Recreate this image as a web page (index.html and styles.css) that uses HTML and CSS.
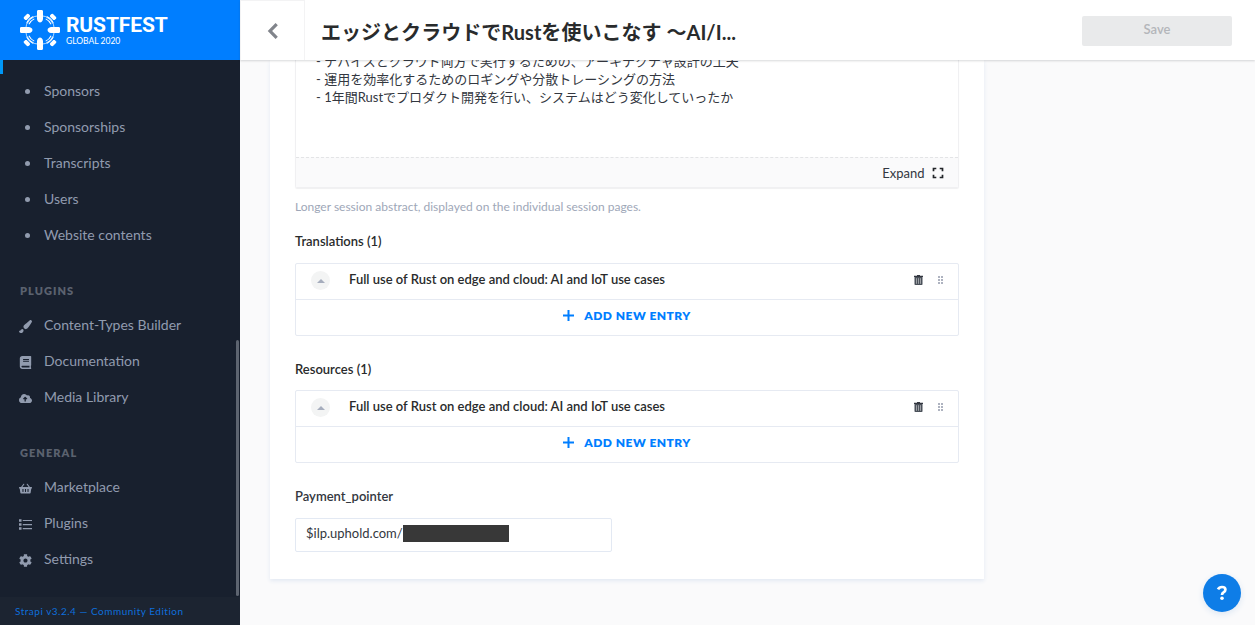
FILE: index.html
```html
<!DOCTYPE html>
<html lang="en">
<head>
<meta charset="utf-8">
<title>RustFest Global 2020</title>
<link rel="stylesheet" href="styles.css">
</head>
<body>
<div class="app">
  <aside class="sidebar">
    <div class="brand">
      <svg class="brand-mark" viewBox="-20 -20 40 40" width="40" height="40">
        <defs>
          <g id="gear-arm">
            <path d="M-2.200-20H2.200L3-19V-11Q3-9.500 1.500-8L0-7.500L-1.500-8Q-3-9.500-3-11V-19Z" fill="#fff"/>
          </g>
          <g id="gear-diagonal">
            <path d="M-2.500-20.500H2.500L3.300-19.500V-17.500L2.300-16.500H-2.300L-3.300-17.500V-19.500Z" fill="#fff"/>
            <path d="M-4.800-14.200Q0-16 4.800-14.200M-3.800-11.900Q0-13.300 3.800-11.900" fill="none" stroke="#fff" stroke-width="1"/>
          </g>
        </defs>
        <circle r="14.500" fill="none" stroke="#fff" stroke-width=".7"/>
        <use href="#gear-arm"/><use href="#gear-arm" transform="rotate(90)"/><use href="#gear-arm" transform="rotate(180)"/><use href="#gear-arm" transform="rotate(270)"/>
        <use href="#gear-diagonal" transform="rotate(45)"/><use href="#gear-diagonal" transform="rotate(135)"/><use href="#gear-diagonal" transform="rotate(225)"/><use href="#gear-diagonal" transform="rotate(315)"/>
      </svg>
      <div class="brand-text"><div class="brand-name">RUSTFEST</div><div class="brand-sub">GLOBAL 2020</div></div>
    </div>
    <nav class="nav">
      <div class="active-row"></div>
      <a class="link"><i class="dot"></i>Sponsors</a>
      <a class="link"><i class="dot"></i>Sponsorships</a>
      <a class="link"><i class="dot"></i>Transcripts</a>
      <a class="link"><i class="dot"></i>Users</a>
      <a class="link"><i class="dot"></i>Website contents</a>
      <h3 class="section">PLUGINS</h3>
      <a class="link"><svg class="icon" viewBox="0 0 512 512"><path d="M180 390c8 76-45 122-112 122C17 512 0 467 0 411c5 3 25 20 33 20 7 0 12-3 15-9 14-40 62-61 101-63ZM457 0c-15 0-29 7-40 17C213 189 177 211 177 264c0 14 3 27 8 40l47 53c10 3 20 5 31 5 61 0 97-45 237-269 6-12 12-25 12-39 0-23-27-54-55-54Z"/></svg>Content-Types Builder</a>
      <a class="link"><svg class="icon" viewBox="0 0 448 512"><path d="M448 360V24c0-13-11-24-24-24H96C43 0 0 43 0 96v320c0 53 43 96 96 96h328c13 0 24-11 24-24v-16c0-8-4-14-9-19-4-15-4-59 0-74 5-4 9-11 9-19ZM128 120h232v36H128Zm0 70h232v36H128Zm253 258H96c-42 0-42-64 0-64h285Z"/></svg>Documentation</a>
      <a class="link"><svg class="icon" viewBox="0 0 640 512"><path d="M538 227c4-11 6-23 6-35 0-71-80-118-149-80C368 67 317 32 256 32c-91 0-166 78-160 168C40 220 0 274 0 336c0 80 64 144 144 144h368c71 0 128-57 128-128 0-62-44-114-102-125ZM393 288h-57v110h-64V288h-57c-14 0-21-17-11-27l89-89c6-6 16-6 22 0l89 89c10 10 3 27-11 27Z"/></svg>Media Library</a>
      <h3 class="section">GENERAL</h3>
      <a class="link"><svg class="icon" viewBox="0 0 576 512"><path fill-rule="evenodd" d="M576 216v16c0 13-11 24-24 24h-8l-26 182c-3 24-23 42-47 42H105c-24 0-44-18-47-42L32 256h-8c-13 0-24-11-24-24v-16c0-13 11-24 24-24h67L193 53c19-28 58 0 39 27l-82 112h276L344 80c-19-27 20-55 39-27l102 139h67c13 0 24 11 24 24ZM312 392V280h-48v112c0 32 48 32 48 0Zm112 0V280h-48v112c0 32 48 32 48 0Zm-224 0V280h-48v112c0 32 48 32 48 0Z"/></svg>Marketplace</a>
      <a class="link"><svg class="icon" viewBox="0 0 512 512"><path d="M0 48h100v100H0Zm0 158h100v100H0Zm0 158h100v100H0ZM148 75h364v48H148Zm0 158h364v48H148Zm0 158h364v48H148Z"/></svg>Plugins</a>
      <a class="link"><svg class="icon" viewBox="0 0 512 512"><path fill-rule="evenodd" d="M487 316l-42-25c4-23 4-47 0-70l42-25c5-3 8-9 6-14-11-36-30-68-55-95-4-4-10-5-15-2l-42 25c-18-15-39-27-61-35V26c0-6-4-11-10-12-37-8-75-8-110 0-6 1-10 6-10 12v49c-22 8-43 20-61 35L87 85c-5-3-11-2-15 2-25 27-44 59-55 95-2 5 1 11 6 14l42 25c-4 23-4 47 0 70l-42 25c-5 3-8 9-6 14 11 36 30 68 55 95 4 4 10 5 15 2l42-25c18 15 39 27 61 35v49c0 6 4 11 10 12 37 8 75 8 110 0 6-1 10-6 10-12v-49c22-8 43-20 61-35l42 25c5 3 11 2 15-2 25-27 44-59 55-95 2-5-1-11-6-14ZM256 336c-107 0-107-160 0-160s107 160 0 160Z"/></svg>Settings</a>
    </nav>
    <i class="scroll-thumb"></i>
    <footer class="version">Strapi v3.2.4 — Community Edition</footer>
  </aside>
  <div class="main">
    <header class="topbar">
      <div class="back"><svg width="12" height="18" viewBox="0 0 12 18"><path d="M9.700 2.200L3 9l6.700 6.800" fill="none" stroke="#81848b" stroke-width="3.200"/></svg></div>
      <h1 class="title">エッジとクラウドでRustを使いこなす 〜AI/I...</h1>
      <button class="save">Save</button>
    </header>
    <main class="content">
      <section class="card">
        <div class="editor">
          <div class="editor-text"><div>- デバイスとクラウド両方で実行するための、アーキテクチャ設計の工夫</div><div>- 運用を効率化するためのロギングや分散トレーシングの方法</div><div>- 1年間Rustでプロダクト開発を行い、システムはどう変化していったか</div></div>
          <div class="editor-bar">Expand<svg width="12" height="12" viewBox="0 0 12 12"><path d="M1.500 4.300V1.500H4.300M7.700 1.500h2.800V4.300M10.500 7.700v2.800H7.700M4.300 10.500H1.500V7.700" fill="none" stroke="#222529" stroke-width="1.700"/></svg></div>
        </div>
        <p class="hint">Longer session abstract, displayed on the individual session pages.</p>
        <h2 class="label label-first">Translations (1)</h2>
        <div class="group">
          <div class="entry"><span class="caret"></span><span class="entry-name">Full use of Rust on edge and cloud: AI and IoT use cases</span>
            <svg class="trash" width="9" height="10" viewBox="0 0 9 10"><path d="M0 .8h3V0h3v.8h3V2H0Z" fill="#333740"/><path d="M.5 2h8v7.200q0 .8-.8.8H1.300q-.8 0-.8-.8Z" fill="#4b515a"/><path d="M2.500 3.200v5.600M4.500 3.200v5.600M6.500 3.200v5.600" stroke="#b4b6ba" stroke-width=".8"/></svg>
            <svg class="grip" width="5" height="8" viewBox="0 0 5 8"><path d="M0 0h2v2H0Zm3 0h2v2h-2ZM0 3h2v2H0Zm3 0h2v2h-2ZM0 6h2v2H0Zm3 0h2v2h-2Z" fill="#aeb3c0"/></svg></div>
          <div class="add"><svg width="11" height="11" viewBox="0 0 11 11"><path d="M5.500 0v11M0 5.500h11" stroke="#007eff" stroke-width="2"/></svg>ADD NEW ENTRY</div>
        </div>
        <h2 class="label">Resources (1)</h2>
        <div class="group">
          <div class="entry"><span class="caret"></span><span class="entry-name">Full use of Rust on edge and cloud: AI and IoT use cases</span>
            <svg class="trash" width="9" height="10" viewBox="0 0 9 10"><path d="M0 .8h3V0h3v.8h3V2H0Z" fill="#333740"/><path d="M.5 2h8v7.200q0 .8-.8.8H1.300q-.8 0-.8-.8Z" fill="#4b515a"/><path d="M2.500 3.200v5.600M4.500 3.200v5.600M6.500 3.200v5.600" stroke="#b4b6ba" stroke-width=".8"/></svg>
            <svg class="grip" width="5" height="8" viewBox="0 0 5 8"><path d="M0 0h2v2H0Zm3 0h2v2h-2ZM0 3h2v2H0Zm3 0h2v2h-2ZM0 6h2v2H0Zm3 0h2v2h-2Z" fill="#aeb3c0"/></svg></div>
          <div class="add"><svg width="11" height="11" viewBox="0 0 11 11"><path d="M5.500 0v11M0 5.500h11" stroke="#007eff" stroke-width="2"/></svg>ADD NEW ENTRY</div>
        </div>
        <h2 class="label label-last">Payment_pointer</h2>
        <div class="field">$ilp.uphold.com/<span class="redacted"></span></div>
      </section>
    </main>
  </div>
  <button class="help" aria-label="Help"><svg width="12" height="16" viewBox="0 0 12 16"><path d="M2 4.400Q3.200 2 6 2Q9.400 2 9.400 4.700Q9.400 6.200 7.500 7.300Q6 8.200 6 10" fill="none" stroke="#fff" stroke-width="2.700"/><circle cx="6" cy="13.300" r="1.800" fill="#fff"/></svg></button>
</div>
</body>
</html>
```
FILE: styles.css
```css
* { box-sizing: border-box; }
body { margin: 0; font: 13px/18px Lato, "Noto Sans CJK JP", sans-serif; color: #333740; -webkit-font-smoothing: antialiased; }
h1, h2, h3, p { margin: 0; }
svg { flex: none; }
.app { display: flex; width: 1255px; height: 625px; overflow: hidden; }
.sidebar { position: relative; display: flex; flex-direction: column; width: 240px; flex: none; background: #18202e; }
.brand { display: flex; height: 60px; padding: 10px 20px; background: #007eff; color: #fff; }
.brand-text { padding: 3px 0 0 6px; }
.brand-name { font: 700 21px/24px Roboto, sans-serif; letter-spacing: -.1px; }
.brand-sub { font-size: 8.5px; line-height: 8px; }
.nav { flex: 1; }
.active-row { height: 14px; border-left: 3px solid #0097f7; }
.link { display: flex; align-items: center; height: 36px; padding: 0 0 2px 19px; font-size: 14px; color: #919bae; }
.dot { width: 5px; height: 5px; margin: 1px 14px 0 6px; border-radius: 50%; background: #919bae; }
.icon { width: 13px; height: 13px; margin: 3px 12px 0 0; fill: #919bae; }
.section { height: 54px; padding: 28px 20px 0; font-size: 11px; line-height: 18px; font-weight: 800; letter-spacing: 1.05px; color: #5b626f; }
.scroll-thumb { position: absolute; right: 1px; top: 340px; width: 3px; height: 256px; border-radius: 2px; background: #5d6470; }
.version { height: 28px; padding: 5px 15px; font-size: 10px; letter-spacing: .5px; background: #1c2431; color: #0e6fdc; }
.main { display: flex; flex-direction: column; flex: 1; min-width: 0; background: #fafafb; }
.topbar { z-index: 1; display: flex; flex: none; align-items: center; height: 60px; padding-right: 23px; background: #fff; box-shadow: 0 1px 2px rgba(40,42,49,.18); }
.back { display: flex; align-items: center; width: 65px; height: 60px; padding: 1px 0 0 26px; border: 1px solid #f3f3f4; border-width: 1px 1px 0; }
.title { flex: 1; padding: 4px 0 0 16px; font-size: 20px; line-height: 28px; font-weight: 700; letter-spacing: .03px; color: #292b2c; white-space: nowrap; }
.save { width: 150px; height: 30px; margin-top: 2px; padding: 0 0 4px; border: 0; border-radius: 2px; background: #e9eaeb; color: #b4b6ba; font: 600 13px/18px Lato, sans-serif; }
.content { flex: 1; padding-left: 30px; overflow: hidden; }
.card { width: 714px; height: 519px; padding: 0 25px; background: #fff; box-shadow: 0 2px 4px #e3e9f3; }
.editor { height: 128px; border: 1px solid #f0f0f2; border-top: 0; border-radius: 0 0 2px 2px; box-shadow: 0 1px 1px #f0f0f1; }
.editor-text { height: 97px; padding-left: 20px; overflow: hidden; }
.editor-text > div { height: 18px; white-space: nowrap; position: relative; top: -8px; }
.editor-bar { display: flex; justify-content: flex-end; align-items: center; gap: 7.500px; height: 30px; padding-right: 14px; border-top: 1px dashed #e3e4e6; background: #fafafb; color: #323740; }
.hint { padding-top: 10px; font-size: 12px; color: #9ea7b8; }
.label { padding: 24px 0 12px; font-size: 13px; line-height: 18px; font-weight: 600; color: #292b2c; }
.label-first { padding-top: 16px; padding-bottom: 13px; }
.label-last { padding-bottom: 13px; color: #333740; }
.group { height: 73px; border: 1px solid #e6eaf2; border-radius: 2px; }
.entry { display: flex; align-items: center; height: 36px; padding: 0 15px 2px; border-bottom: 1px solid #e6eaf2; color: #292b2c; font-weight: 600; }
.caret { display: flex; align-items: center; justify-content: center; width: 19px; height: 19px; border-radius: 50%; background: #f3f4f4; }
.caret::before { content: ""; border: 4px solid transparent; border-top: 0; border-bottom-color: #a6adbd; }
.entry-name { flex: 1; padding: 0 0 3px 19px; }
.trash { margin-right: 15px; margin-bottom: 1px; }
.grip { margin-bottom: 1px; }
.add { display: flex; align-items: center; justify-content: center; gap: 10px; height: 35px; padding-bottom: 3px; color: #007eff; font-size: 12px; font-weight: 800; letter-spacing: .48px; }
.add svg { margin-bottom: 2px; }
.field { display: flex; width: 317px; height: 34px; padding: 5px 10px; border: 1px solid #e3e9f3; border-radius: 2px; }
.redacted { width: 106px; height: 17px; margin-top: 1px; background: #383838; }
.help { position: absolute; left: 1203px; top: 574px; display: flex; align-items: center; justify-content: center; width: 38px; height: 38px; padding: 0; border: 0; border-radius: 50%; background: #0e7de7; box-shadow: 0 2px 6px #dbe6f3; }
```
